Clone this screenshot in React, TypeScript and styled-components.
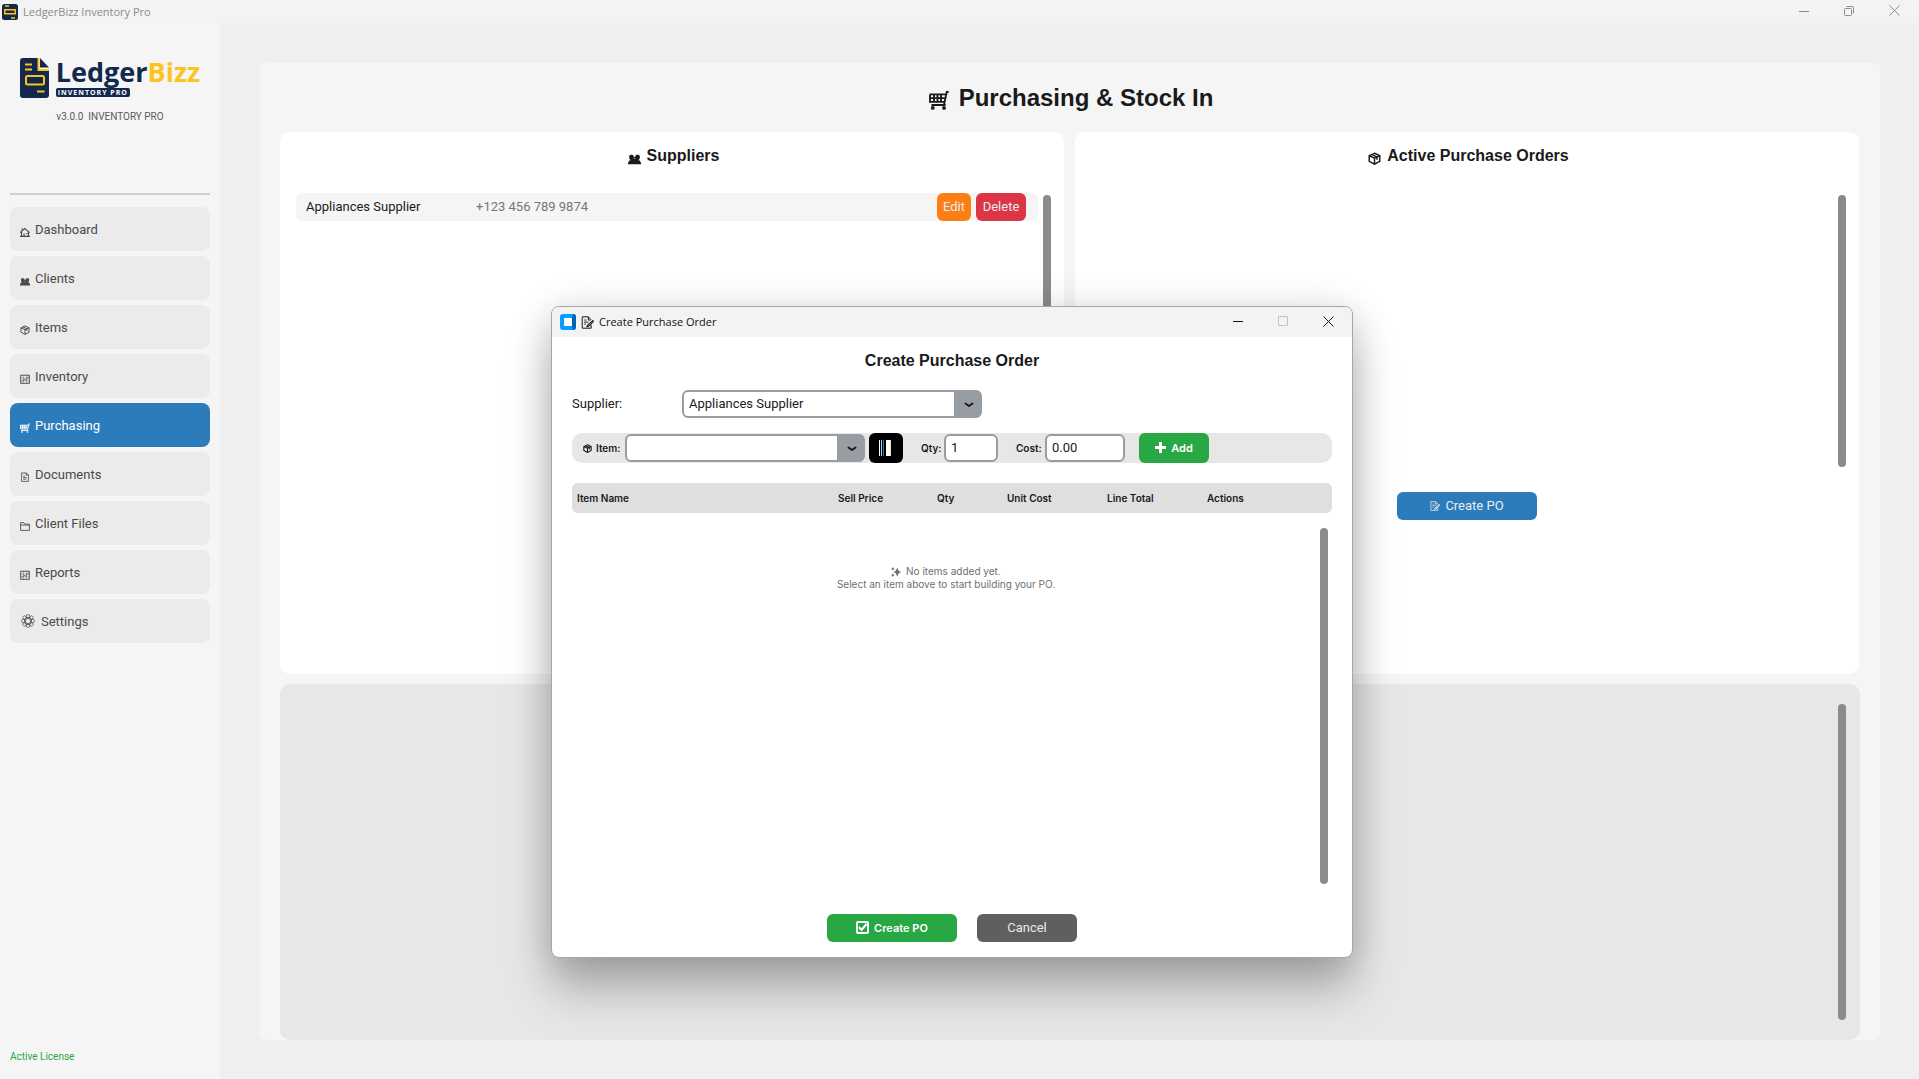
import React from 'react';
import styled, { createGlobalStyle, css } from 'styled-components';

const ui = `Roboto, "Liberation Sans", sans-serif`;
const arial = `"Liberation Sans", Arial, sans-serif`;
const small = `Inter, "Liberation Sans", sans-serif`;
const segoe = `"Open Sans", "Noto Sans", sans-serif`;

const GlobalStyle = createGlobalStyle`
  * { box-sizing: border-box; }
  body { margin: 0; background: #efefef; font-family: ${ui}; font-size: 13px; color: #1a1a1a; }
  button, input, select { font: inherit; color: inherit; margin: 0; }
  h1, h2, p { margin: 0; }
`;

const Window = styled.div`
  display: flex;
  flex-direction: column;
  min-height: 100vh;
  position: relative;
`;

const TitleBar = styled.header`
  display: flex;
  align-items: center;
  height: 23px;
  padding: 0 18px 0 2px;
  gap: 5px;
  background: #f3f3f3;
  color: #8c8c8c;
  font: 11px/16px ${segoe};
`;

const TitleText = styled.span`
  flex: 1;
`;

const WindowButtons = styled.div`
  display: flex;
  gap: 31px;
`;

const WindowButton = styled.button`
  display: flex;
  align-items: center;
  justify-content: center;
  width: 14px;
  height: 16px;
  padding: 0 0 2px;
  border: 0;
  background: none;
`;

const Body = styled.div`
  display: flex;
  flex: 1;
`;

const Sidebar = styled.aside`
  display: flex;
  flex-direction: column;
  flex: none;
  width: 220px;
  padding: 30px 10px 16px;
  background: #f5f5f5;
`;

const Brand = styled.div`
  display: flex;
  flex-direction: column;
  align-items: center;
  height: 142px;
  border-bottom: 2px solid #cecece;
  margin-bottom: 12px;
`;

const LogoRow = styled.div`
  display: flex;
  align-items: center;
  gap: 7px;
  height: 50px;
`;

const LogoText = styled.div`
  display: flex;
  flex-direction: column;
  align-items: flex-start;
  gap: 4px;
`;

const LogoName = styled.div`
  font: 700 27px/24px ${segoe};
  color: #12284c;
  span { color: #fdc41f; }
`;

const LogoTag = styled.div`
  padding: 0 2px;
  border-radius: 2px;
  background: #12284c;
  color: #fff;
  font: 700 7px/9px ${segoe};
  letter-spacing: 1px;
`;

const Version = styled.p`
  margin-top: 8px;
  font: 10px/12px ${ui};
  color: #5a5a5a;
  white-space: pre;
`;

const Nav = styled.nav`
  display: flex;
  flex-direction: column;
  gap: 5px;
  flex: 1;
`;

const NavButton = styled.button<{ $active?: boolean }>`
  display: flex;
  align-items: center;
  gap: 5px;
  height: 44px;
  padding: 0 10px;
  border: 0;
  border-radius: 8px;
  text-align: left;
  background: ${p => (p.$active ? '#2c7bba' : '#ebebeb')};
  color: ${p => (p.$active ? '#fff' : '#4a4a4a')};
  svg { margin-top: 6px; }
  svg[width='14'] { margin: 0 1px 0 1px; }
`;

const License = styled.p`
  font: 10px/12px ${ui};
  color: #28a745;
`;

const Main = styled.main`
  flex: 1;
  display: flex;
  padding: 40px 39px 39px 40px;
  background: #efefef;
`;

const Page = styled.section`
  flex: 1;
  display: flex;
  flex-direction: column;
  padding: 0 20px;
  border-radius: 6px;
  background: #f5f5f5;
`;

const PageTitle = styled.h1`
  display: flex;
  align-items: center;
  justify-content: center;
  gap: 10px;
  height: 69px;
  padding-left: 2px;
  font: 700 24px/28px ${arial};
  svg { margin-top: 4px; }
`;

const Cards = styled.div`
  display: grid;
  grid-template-columns: 1fr 1fr;
  gap: 11px;
  padding-right: 1px;
  margin-bottom: 10px;
`;

const Card = styled.section`
  display: flex;
  flex-direction: column;
  height: 542px;
  padding: 14px 13px 0 16px;
  border-radius: 10px;
  background: #fff;
`;

const CardTitle = styled.h2`
  display: flex;
  justify-content: center;
  align-items: center;
  gap: 6px;
  height: 20px;
  margin-bottom: 27px;
  font: 700 16px/20px ${arial};
  svg { margin-top: 4px; }
`;

const ScrollArea = styled.div`
  display: flex;
  gap: 5px;
  height: 274px;
  margin-bottom: 25px;
`;

const ScrollContent = styled.div`
  flex: 1;
`;

const Thumb = styled.div`
  width: 8px;
  margin-top: 2px;
  border-radius: 4px;
  background: #8b8b8b;
`;

const SupplierRow = styled.div`
  display: flex;
  align-items: center;
  height: 28px;
  padding: 0 12px 0 10px;
  border-radius: 6px;
  background: #f5f5f5;
`;

const SupplierName = styled.span`
  width: 170px;
  padding-bottom: 1px;
`;

const Phone = styled.span`
  flex: 1;
  padding-bottom: 1px;
  color: #777;
`;

const Button = styled.button<{ $bg: string; $w: number; $h?: number; $bold?: boolean }>`
  display: flex;
  align-items: center;
  justify-content: center;
  gap: 5px;
  flex: none;
  width: ${p => p.$w}px;
  height: ${p => p.$h ?? 28}px;
  padding: 0 0 1px;
  border: 0;
  border-radius: 6px;
  background: ${p => p.$bg};
  color: ${p => (p.$bold ? '#fff' : '#e8ecf2')};
  ${p => p.$bold && css`font: 600 11px/14px ${small};`}
`;

const RowActions = styled.div`
  display: flex;
  gap: 5px;
`;

const CardFooter = styled.div`
  display: flex;
  justify-content: center;
  padding-right: 3px;
`;

const Detail = styled.section`
  flex: 1;
  display: flex;
  justify-content: flex-end;
  padding: 18px 14px 20px;
  border-radius: 10px;
  background: #e7e7e7;
`;

const Dialog = styled.div`
  position: absolute;
  top: 306px;
  left: 551px;
  width: 802px;
  height: 652px;
  display: flex;
  flex-direction: column;
  border: 1px solid #a6a6a6;
  border-radius: 8px;
  background: #fff;
  box-shadow: 0 32px 46px 0 rgba(0, 0, 0, 0.26), 0 2px 36px rgba(0, 0, 0, 0.14);
`;

const DialogBar = styled.div`
  display: flex;
  align-items: center;
  height: 30px;
  padding: 0 17px 0 8px;
  gap: 5px;
  border-radius: 7px 7px 0 0;
  background: #f3f3f3;
  color: #111;
  font: 11px/16px ${segoe};
`;

const DialogBody = styled.div`
  flex: 1;
  display: flex;
  flex-direction: column;
  padding: 14px 20px 15px;
`;

const DialogTitle = styled.h2`
  text-align: center;
  font: 700 16px/20px ${arial};
  margin-bottom: 19px;
`;

const Field = styled.div`
  display: flex;
  align-items: center;
  margin-bottom: 15px;
`;

const FieldLabel = styled.label`
  width: 110px;
  padding-bottom: 1px;
`;

const SelectWrap = styled.div<{ $w: number }>`
  position: relative;
  width: ${p => p.$w}px;
  svg { position: absolute; right: 8px; top: 12px; pointer-events: none; }
`;

const Select = styled.select`
  appearance: none;
  display: block;
  width: 100%;
  height: 28px;
  padding: 0 30px 1px 5px;
  border: 2px solid #979da2;
  border-radius: 6px;
  background: linear-gradient(to right, #fff calc(100% - 26px), #979da2 0);
`;

const ItemBar = styled.div`
  display: flex;
  align-items: center;
  height: 30px;
  margin-bottom: 20px;
  padding-left: 11px;
  border-radius: 10px;
  background: #e7e7e7;
`;

const SmallLabel = styled.label<{ $w: number }>`
  display: flex;
  align-items: center;
  gap: 4px;
  flex: none;
  width: ${p => p.$w}px;
  font: 600 10px/14px ${small};
`;

const TextInput = styled.input<{ $w: number; $gap: number }>`
  width: ${p => p.$w}px;
  height: 28px;
  margin-right: ${p => p.$gap}px;
  padding: 0 5px 1px;
  border: 2px solid #979da2;
  border-radius: 6px;
  background: #fff;
`;

const ScanButton = styled.button`
  display: flex;
  align-items: center;
  justify-content: center;
  width: 34px;
  height: 30px;
  margin: 0 18px 0 4px;
  padding: 0 2px 0 0;
  border: 0;
  border-radius: 6px;
  background: #000;
`;

const Table = styled.table`
  width: 100%;
  table-layout: fixed;
  border-collapse: separate;
  border-spacing: 0;
  border-radius: 6px;
  background: #dfdfdf;
`;

const Th = styled.th<{ $w?: number }>`
  width: ${p => (p.$w ? p.$w + 'px' : 'auto')};
  height: 30px;
  padding: 0 0 0 5px;
  text-align: left;
  font: 600 10px/14px ${small};
`;

const Lines = styled.div`
  flex: 1;
  display: flex;
  margin: 13px 4px 30px 0;
`;

const Empty = styled.p`
  flex: 1;
  padding-top: 39px;
  text-align: center;
  font: 10px/13px ${small};
  color: #707070;
  svg { vertical-align: -2px; margin-right: 2px; }
`;

const DialogFooter = styled.div`
  display: flex;
  justify-content: center;
  gap: 20px;
`;

type IconProps = { size?: number; sw?: number };
const Svg = ({ size = 10, sw = 1.5, children }: IconProps & { children: React.ReactNode }) => (
  <svg width={size} height={size} viewBox="0 0 16 16" fill="none" stroke="currentColor" strokeWidth={sw} aria-hidden="true">
    {children}
  </svg>
);

const House = (p: IconProps) => (
  <Svg {...p} sw={1.800}><path d="M0 9 7.500 2.500 15.500 9M2.500 8V15h11V8M0 15h16M3.500 6V2.500M6.500 15v-4.500M10 10.500h2" /></Svg>
);
const People = (p: IconProps) => (
  <Svg {...p}>
    <g stroke="none" fill="currentColor">
      <rect x="1.500" y="3.500" width="5.500" height="6" rx="2" />
      <rect x="9" y="3.500" width="5.500" height="6" rx="2" />
      <path d="M3 8.500h10V11H3zM1 10.500h14V13H1zM0 12.500h16V15H0zM3 6h10v2H3z" />
    </g>
  </Svg>
);
const Box = (p: IconProps) => (
  <Svg {...p}><path d="M8 1.500 14.500 4.500v7L8 15 1.500 11.500v-7ZM1.500 4.500 8 7.500l6.500-3M8 7.500V15M4.500 3l6.500 3v3.500" /></Svg>
);
const Chart = (p: IconProps) => (
  <Svg {...p} sw={p.sw ?? 1.200}><path d="M1 2h14v13H1ZM5.500 2v13M10.500 2v13M1 6.500h14M1 11h14" strokeOpacity=".5" /><path d="M1 2h14v13H1ZM3 12l4-4 2 2 5-6" /></Svg>
);
const Cart = (p: IconProps) => (
  <Svg {...p}>
    <path d="M.5 3.500H13M.8 3.500v6h11M1 6.500h11.500M4 3.500v6M6.800 3.500v6M9.600 3.500v6M15.800 1.500h-1.600L12 12H2M12.500 11.500l.500 1" />
    <circle cx="3" cy="14.300" r=".8" /><circle cx="12" cy="14.300" r=".8" />
  </Svg>
);
const Doc = (p: IconProps) => (
  <Svg {...p} sw={p.sw ?? 1.300}><path d="M2.500 1.500h7.500l3.500 3.500v10h-11ZM10 1.500V5h3.500M5 6.500h3M5 9h6M5 11.500h5" /></Svg>
);
const Folder = (p: IconProps) => (
  <Svg {...p} sw={1.400}><path d="M1 15V2.500h5L7.500 5H15v10ZM1 6.500h14" /></Svg>
);
const Memo = (p: IconProps) => (
  <Svg {...p} sw={p.sw ?? 1.200}>
    <path d="M12.500 11v4h-11V1h7.500l3.500 3.500M9 1v4h3M4 5h2.500M4 7.500h5M4 10h2" />
    <path d="m14.800 5.300-6.500 5.500-1.300 2.700 3-1 5.800-6Z" fill="currentColor" fillOpacity=".6" />
  </Svg>
);
const Gear = () => (
  <Svg size={14} sw={0.8}>
    {[0, 45, 90, 135, 180, 225, 270, 315].map(a => (
      <circle key={a} cx="8" cy="2.600" r="2" transform={`rotate(${a} 8 8)`} />
    ))}
    <circle cx="8" cy="8" r="4.200" /><circle cx="8" cy="8" r="3" />
  </Svg>
);
const Sparkle = () => (
  <Svg size={10}><path stroke="none" fill="currentColor" d="M10 1q1.500 5.500 6 7-4.500 1.500-6 7-1.500-5.500-6-7 4.500-1.500 6-7ZM3 0q.8 2.600 3 3-2.200.4-3 3-.8-2.600-3-3 2.200-.4 3-3ZM3 10q.8 2.600 3 3-2.200.4-3 3-.8-2.600-3-3 2.200-.4 3-3Z" /></Svg>
);
const Plus = () => (
  <svg width="11" height="11" viewBox="0 0 11 11" fill="#fff" aria-hidden="true"><path d="M4 0h3v4h4v3H7v4H4V7H0V4h4z" /></svg>
);
const Check = () => (
  <svg width="13" height="13" viewBox="0 0 13 13" fill="none" stroke="#fff" strokeWidth="2" aria-hidden="true"><rect x="1" y="1" width="11" height="11" rx="1" /><path d="m3 6 2.500 3L10.500 3" /></svg>
);
const Arrow = () => (
  <svg width="10" height="6" viewBox="0 0 10 6" fill="none" stroke="#1a1a1a" strokeWidth="2" strokeLinecap="round" strokeLinejoin="round" aria-hidden="true"><path d="M1.500 1.500 5 4 8.500 1.500" /></svg>
);
const Barcode = () => (
  <svg width="12" height="16" viewBox="0 0 12 16" aria-hidden="true">
    <path fill="#fff" d="M0 0h1v16H0zM7 0h5v16H7z" /><path fill="#a9d4ee" d="M2 0h1v16H2z" /><path fill="#3f76b5" d="M4 0h1v16H4z" /><path fill="#f3d9b1" d="M11 0h1v16h-1z" />
  </svg>
);
const AppIcon = () => (
  <svg width="16" height="16" viewBox="0 0 16 16" aria-hidden="true">
    <rect width="16" height="16" rx="2.500" fill="#12284c" />
    <path d="M2.800 5.800h10.400v4H2.800Z" fill="none" stroke="#fdc41f" strokeWidth="1.500" />
    <path d="M3 2h4M9 14h4" stroke="#fdc41f" strokeWidth="1.500" />
  </svg>
);
const LogoMark = () => (
  <svg width="29" height="40" viewBox="0 0 29 40" aria-hidden="true">
    <path d="M3 0h15v12h11v25a3 3 0 0 1-3 3H3a3 3 0 0 1-3-3V3a3 3 0 0 1 3-3Z" fill="#12284c" />
    <path d="M20 0 29 9.500h-9Z" fill="#12284c" />
    <path d="M18.500 0v12H29M5 6.500h7M5 11.500h7M17 33.500h7.500" fill="none" stroke="#fdc41f" strokeWidth="2" />
    <rect x="6" y="18" width="18" height="8.500" rx="1.500" fill="none" stroke="#fdc41f" strokeWidth="2" />
  </svg>
);
const TkIcon = () => (
  <svg width="16" height="16" viewBox="0 0 16 16" aria-hidden="true">
    <rect width="16" height="16" rx="3" fill="#0a9bff" />
    <path d="M12 4 13 0Q16 .3 16 3v10q0 2.700-3 3L12 12Z" fill="#0563b5" />
    <rect x="4" y="4" width="8" height="8" rx="1" fill="#fff" />
  </svg>
);

const Minimise = () => <svg width="10" height="10" viewBox="0 0 10 10" stroke="currentColor"><path d="M0 5.500h10" /></svg>;
const Restore = () => (
  <svg width="10" height="10" viewBox="0 0 10 10" fill="none" stroke="currentColor"><rect x=".5" y="2.500" width="7" height="7" rx="1" /><path d="M2.500.5H8q1.500 0 1.500 1.500v5.500" /></svg>
);
const Maximise = () => <svg width="10" height="10" viewBox="0 0 10 10" fill="none" stroke="#c2c2c2"><rect x=".5" y=".5" width="9" height="9" rx=".5" /></svg>;
const Close = () => <svg width="11" height="11" viewBox="0 0 11 11" stroke="currentColor"><path d="m.5.5 10 10M10.500.5l-10 10" /></svg>;

const navItems: [string, React.ReactNode][] = [
  ['Dashboard', <House />],
  ['Clients', <People />],
  ['Items', <Box />],
  ['Inventory', <Chart />],
  ['Purchasing', <Cart />],
  ['Documents', <Doc />],
  ['Client Files', <Folder />],
  ['Reports', <Chart />],
  ['Settings', <Gear />],
];

const columns: [string, number?][] = [
  ['Item Name', 261],
  ['Sell Price', 99],
  ['Qty', 70],
  ['Unit Cost', 100],
  ['Line Total', 100],
  ['Actions'],
];

export default function App() {
  return (
    <Window>
      <GlobalStyle />
      <TitleBar>
        <AppIcon />
        <TitleText>LedgerBizz Inventory Pro</TitleText>
        <WindowButtons>
          <WindowButton aria-label="Minimise"><Minimise /></WindowButton>
          <WindowButton aria-label="Restore"><Restore /></WindowButton>
          <WindowButton aria-label="Close"><Close /></WindowButton>
        </WindowButtons>
      </TitleBar>
      <Body>
        <Sidebar>
          <Brand>
            <LogoRow>
              <LogoMark />
              <LogoText>
                <LogoName>Ledger<span>Bizz</span></LogoName>
                <LogoTag>INVENTORY PRO</LogoTag>
              </LogoText>
            </LogoRow>
            <Version>{'v3.0.0  INVENTORY PRO'}</Version>
          </Brand>
          <Nav>
            {navItems.map(([label, icon]) => (
              <NavButton key={label} $active={label === 'Purchasing'}>
                {icon}
                <span>{label}</span>
              </NavButton>
            ))}
          </Nav>
          <License>Active License</License>
        </Sidebar>
        <Main>
          <Page>
            <PageTitle><Cart size={20} sw={1.500} />Purchasing &amp; Stock In</PageTitle>
            <Cards>
              <Card>
                <CardTitle><People size={13} />Suppliers</CardTitle>
                <ScrollArea>
                  <ScrollContent>
                    <SupplierRow>
                      <SupplierName>Appliances Supplier</SupplierName>
                      <Phone>+123 456 789 9874</Phone>
                      <RowActions>
                        <Button $bg="#fd7e14" $w={34}>Edit</Button>
                        <Button $bg="#dc3545" $w={50}>Delete</Button>
                      </RowActions>
                    </SupplierRow>
                  </ScrollContent>
                  <Thumb />
                </ScrollArea>
              </Card>
              <Card>
                <CardTitle><Box size={13} sw={1.800} />Active Purchase Orders</CardTitle>
                <ScrollArea>
                  <ScrollContent />
                  <Thumb />
                </ScrollArea>
                <CardFooter>
                  <Button $bg="#2c7bba" $w={140}><Memo />Create PO</Button>
                </CardFooter>
              </Card>
            </Cards>
            <Detail><Thumb /></Detail>
          </Page>
        </Main>
      </Body>

      <Dialog role="dialog" aria-labelledby="po-title">
        <DialogBar>
          <TkIcon />
          <Memo size={13} />
          <TitleText>Create Purchase Order</TitleText>
          <WindowButtons>
            <WindowButton aria-label="Minimise"><Minimise /></WindowButton>
            <WindowButton aria-label="Maximise" disabled><Maximise /></WindowButton>
            <WindowButton aria-label="Close"><Close /></WindowButton>
          </WindowButtons>
        </DialogBar>
        <DialogBody>
          <DialogTitle id="po-title">Create Purchase Order</DialogTitle>
          <Field>
            <FieldLabel htmlFor="supplier">Supplier:</FieldLabel>
            <SelectWrap $w={300}>
              <Select id="supplier"><option>Appliances Supplier</option></Select>
              <Arrow />
            </SelectWrap>
          </Field>
          <ItemBar>
            <SmallLabel htmlFor="item" $w={42}><Box size={9} sw={2} />Item:</SmallLabel>
            <SelectWrap $w={240}>
              <Select id="item"><option></option></Select>
              <Arrow />
            </SelectWrap>
            <ScanButton aria-label="Scan barcode"><Barcode /></ScanButton>
            <SmallLabel htmlFor="qty" $w={23}>Qty:</SmallLabel>
            <TextInput id="qty" defaultValue="1" $w={54} $gap={18} />
            <SmallLabel htmlFor="cost" $w={29}>Cost:</SmallLabel>
            <TextInput id="cost" defaultValue="0.00" $w={80} $gap={14} />
            <Button $bg="#28a745" $w={70} $h={30} $bold><Plus />Add</Button>
          </ItemBar>
          <Table>
            <thead>
              <tr>{columns.map(([name, w]) => <Th key={name} $w={w}>{name}</Th>)}</tr>
            </thead>
          </Table>
          <Lines>
            <Empty>
              <Sparkle /> No items added yet.<br />
              Select an item above to start building your PO.
            </Empty>
            <Thumb />
          </Lines>
          <DialogFooter>
            <Button $bg="#28a745" $w={130} $bold><Check />Create PO</Button>
            <Button $bg="#5f5f5f" $w={100}>Cancel</Button>
          </DialogFooter>
        </DialogBody>
      </Dialog>
    </Window>
  );
}
